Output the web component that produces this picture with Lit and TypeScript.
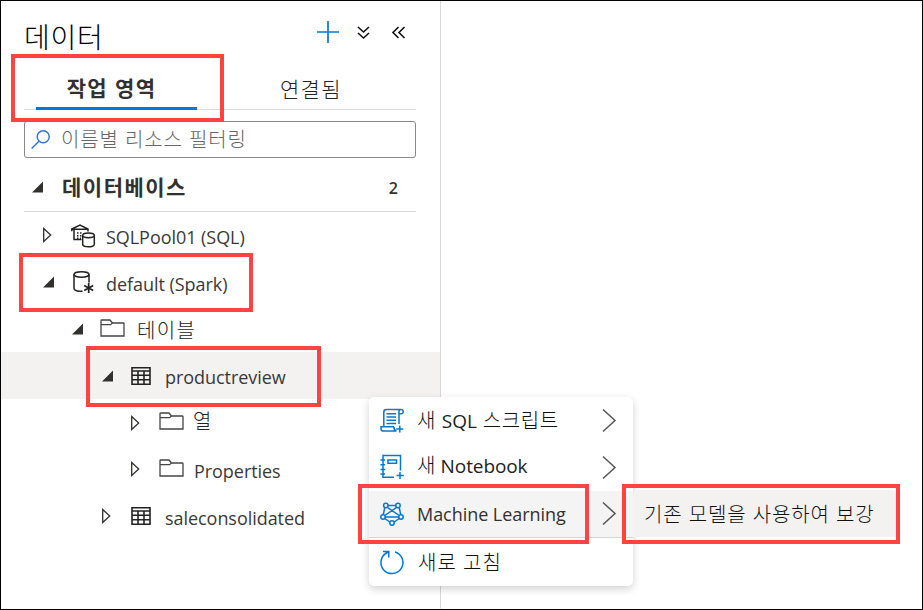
import { LitElement, html, css, svg, nothing } from "lit";
import { customElement, property } from "lit/decorators.js";

const icons: Record<string, unknown> = {
  open: svg`<path d="M12 2.500v11H1z" fill="#323130"/>`,
  closed: svg`<path d="M1.700 1.500v13l7-6.500z" fill="none" stroke="#323130" stroke-width="1.300"/>`,
  plus: svg`<path d="M11 0v22M0 11h22" stroke="#0078d4" stroke-width="1.700"/>`,
  down: svg`<path d="M1 1l5.500 5L12 1M1 7l5.500 5L12 7" fill="none" stroke="#111" stroke-width="1.600"/>`,
  left: svg`<path d="M6.500 1L1 6.500l5.500 5.500M12.500 1L7 6.500l5.500 5.500" fill="none" stroke="#111" stroke-width="1.600"/>`,
  search: svg`<g fill="none" stroke="#2b72d7" stroke-width="1.400"><circle cx="12.200" cy="6.800" r="6"/><path d="M8 11.200L.6 18.600"/></g>`,
  pool: svg`<g fill="none" stroke="#222" stroke-width="1.500"><path d="M.8 7.300V5L9 1l8 4v2.500M.8 5.300H17M3 6v9.500h7.500"/><path d="M6 9h6M6 11.700h5M6 14.300h4" stroke-dasharray="1.500 1.500"/><path fill="#fff" d="M11.700 11.300v9c0 3.400 11.600 3.400 11.600 0v-9"/><ellipse fill="#fff" cx="17.500" cy="11.300" rx="5.800" ry="2.400"/></g>`,
  spark: svg`<g fill="none" stroke="#222" stroke-width="1.500"><ellipse cx="8.500" cy="3.500" rx="7.500" ry="2.700"/><path d="M1 3.500v14c0 2 4 3 8.500 2.800M16 3.500v8"/><path d="M15.700 12v10M11.200 14.500l9 5M20.200 14.500l-9 5" stroke-width="1.700"/></g>`,
  folder: svg`<path d="M1 4.500V.7Q1 0 1.700 0H10l2.500 3h10.800q.7 0 .7.700V16H1zM1 4.700h9.500L12.500 3" fill="none" stroke="#444" stroke-width="1.300"/>`,
  table: svg`<path d="M1 .7h18v16.500H1zM1 4h18M1 8.300h18M1 12.700h18M7 4v13.200M13 4v13.200" fill="none" stroke="#222" stroke-width="1.600"/>`,
  chevron: svg`<path d="M1 .5l12 11L1 22.500" fill="none" stroke="#555" stroke-width="1.500"/>`,
  script: svg`<g fill="none" stroke="#0078d4" stroke-width="1.500"><path d="M3.800 17.500V3Q3.800 .5 6.500 .5H21q2.200 0 2.200 2.200T21 4.800h-2V2.500q0-2 2-2M19 4.500v10.500M6.500 4.800h9.500M6.500 8h9.500M6.500 11.200h9.500M6.500 14.500h9.500M14 17.800H1V19.500q0 2.600 2.500 2.600H16.500M14 18q-.3 3.500 2.500 4M19.800 16.500v7M16.300 20h7"/></g>`,
  notebook: svg`<g fill="none" stroke="#0078d4" stroke-width="1.500"><path d="M14 21.300H3V-.5h17.500v15M8 4h8.500v3.200H8zM.5 4h4.500M.5 8.800h4.500M.5 13.500h4.500M.5 18h4.500M20 16v7M16.500 19.500h7.300"/></g>`,
  ml: svg`<g fill="none" stroke="#0078d4" stroke-width="1.500"><path d="M6 3.500h12M5 4.500L3 14M19 4.500l2 9.500M6 4.500L20 14M18 4.500L4 14M5 15h14M4 16l6.500 4.500M20 16l-6.500 4.500"/><g fill="#f4f4f4"><circle cx="5.800" cy="3.500" r="2.200"/><circle cx="18" cy="3.500" r="2.200"/><circle cx="3" cy="15" r="2.200"/><circle cx="21" cy="15" r="2.200"/><circle cx="12" cy="21" r="2.200"/></g></g>`,
  refresh: svg`<path d="M15 2A11 11 0 1 1 8 2.300M3 1.500h5.800v6" fill="none" stroke="#0078d4" stroke-width="1.500"/>`,
};

@customElement("ui-icon")
class UiIcon extends LitElement {
  @property() name = "";
  @property({ type: Number }) w = 24;
  @property({ type: Number }) h = 24;
  static styles = css`
    :host { display: flex; flex: none; }
    svg { display: block; overflow: visible; }
  `;
  render() {
    return html`<svg width=${this.w} height=${this.h} viewBox="0 0 ${this.w} ${this.h}">${icons[this.name]}</svg>`;
  }
}

const tree = [
  { cls: "l1", open: false, icon: "pool", w: 24, h: 23, text: "SQLPool01 (SQL)", t: "latin" },
  { cls: "l1", open: true, icon: "spark", w: 21, h: 22, text: "default (Spark)", t: "latin" },
  { cls: "l2", open: true, icon: "folder", w: 25, h: 18, text: "테이블", t: "tables" },
  { cls: "l3 selected", open: true, icon: "table", w: 23, h: 18, text: "productreview", t: "latin" },
  { cls: "l4", open: false, icon: "folder", w: 25, h: 20, text: "열", t: "column" },
  { cls: "l4", open: false, icon: "folder", w: 25, h: 18, text: "Properties", t: "latin" },
  { cls: "l3", open: false, icon: "table", w: 23, h: 18, text: "saleconsolidated", t: "latin" },
];

const menu = [
  { cls: "", icon: "script", text: html`새 <i>SQL</i> 스크립트`, t: "m-sql", more: true },
  { cls: "", icon: "notebook", text: html`새 <i>Notebook</i>`, t: "m-note", more: true },
  { cls: "hover", icon: "ml", text: "Machine Learning", t: "m-ml", more: true },
  { cls: "", icon: "refresh", text: "새로 고침", t: "m-ref", more: false },
];

@customElement("app-root")
class AppRoot extends LitElement {
  static styles = css`
    :host { display: block; }
    * { box-sizing: border-box; }
    .page {
      position: relative; width: 923px; height: 610px; border: 1px solid #000;
      background: #fff; overflow: hidden; color: #3a3938;
      font: 300 20px/30px "Open Sans", "Noto Sans CJK KR", sans-serif; white-space: nowrap;
    }
    .panel { width: 440px; height: 608px; border-right: 1px solid #d8d8d8; }
    .header { display: flex; align-items: center; height: 62px; padding-left: 23px; }
    .title { width: 293px; font-size: 28px; line-height: 40px; letter-spacing: .7px; color: #000; padding-top: 10px; }
    .actions { display: flex; align-items: center; gap: 18px; }
    .actions ui-icon:last-child { margin-left: 4px; }
    .tabs { display: flex; height: 47px; width: 392px; margin-left: 23px; border-bottom: 1px solid #dcdcdc; }
    .tab { height: 47px; padding-top: 10px; letter-spacing: 1.300px; font-size: 21px; text-align: center; color: #222; }
    .tab.on { width: 161px; margin-left: 12px; padding-right: 10px; font-weight: 700; letter-spacing: 1.400px; border-bottom: 3px solid #0078d4; color: #323130; }
    .tab.off { margin-left: 83px; padding-top: 11px; }
    .search {
      display: flex; align-items: center; gap: 11px; width: 392px; height: 37px; margin: 11px 0 0 23px;
      padding-left: 6px; border: 1px solid #8a8886; border-radius: 3px; color: #666; letter-spacing: .9px;
    }
    .search span { padding-top: 1px; }
    .group {
      display: flex; align-items: center; width: 392px; height: 54px; margin-left: 23px; padding-top: 5px;
      padding-left: 7px; border-bottom: 1px solid #d6d6d6; color: #323130;
    }
    .group b { font-size: 21px; font-weight: 700; letter-spacing: 1.500px; margin-left: 17px; flex: 1; }
    .group .count { font-size: 16px; font-weight: 600; margin-right: 18px; padding-top: 2px; }
    .row { display: flex; align-items: center; height: 46.800px; }
    .l1 { padding-left: 41px; }
    .l2 { padding-left: 70px; }
    .l3 { padding-left: 100px; }
    .l4 { padding-left: 129px; }
    .selected { background: #f3f2f1; }
    .toggle { width: 14px; margin-right: 15px; }
    .kind { display: flex; justify-content: center; width: 24px; margin-right: 11px; }
    .latin { font-size: 18px; font-weight: 400; letter-spacing: -.05px; padding-top: 3px; }
    .tables { letter-spacing: 1.300px; margin-left: 2px; padding-top: 5px; color: #222; }
    .column { margin-left: -1px; padding-bottom: 1px; color: #222; }
    .menu {
      position: absolute; left: 368px; top: 396px; width: 264px; height: 189px; border-radius: 5px;
      background: #fff; box-shadow: 0 3px 9px rgba(0, 0, 0, .18); color: #111;
    }
    .item { display: flex; align-items: center; height: 47px; padding: 0 17px 0 11px; }
    .item .t { flex: 1; margin-left: 13px; }
    .item i { font-style: normal; font-weight: 400; font-size: 19px; letter-spacing: 0; color: #222; }
    .hover { background: #f4f4f4; border-bottom: 1px solid #d4d4d4; }
    .m-sql { letter-spacing: .6px; }
    .item .m-note { padding-bottom: 3px; }
    .m-note i { letter-spacing: -.1px; }
    .m-ml { font-size: 18px; font-weight: 400; letter-spacing: -.05px; color: #323130; }
    .item .m-ref { letter-spacing: 1px; margin-left: 14px; padding-top: 3px; }
    .submenu {
      position: absolute; left: 632px; top: 489px; width: 263px; height: 47px; padding: 10px 0 0 11px;
      border-radius: 5px 5px 0 0; background: #f3f2f1; color: #111; letter-spacing: .9px;
    }
    .mark { position: absolute; border: 4px solid #ff4343; }
    .mark-tab { left: 10px; top: 53px; width: 213px; height: 68px; }
    .mark-spark { left: 18px; top: 252px; width: 234px; height: 59px; }
    .mark-table { left: 85px; top: 345px; width: 235px; height: 61px; }
    .mark-ml { left: 357px; top: 483px; width: 231px; height: 60px; }
    .mark-sub { left: 621px; top: 483px; width: 278px; height: 60px; }
  `;
  render() {
    return html`<div class="page">
      <div class="panel">
        <div class="header"><div class="title">데이터</div><div class="actions"
          ><ui-icon name="plus" w="22" h="22"></ui-icon
          ><ui-icon name="down" w="13" h="13"></ui-icon
          ><ui-icon name="left" w="13" h="13"></ui-icon></div></div>
        <div class="tabs"><div class="tab on">작업 영역</div><div class="tab off">연결됨</div></div>
        <div class="search"><ui-icon name="search" w="19" h="19"></ui-icon><span>이름별 리소스 필터링</span></div>
        <div class="group"><ui-icon name="open" w="14" h="16"></ui-icon><b>데이터베이스</b><span class="count">2</span></div>
        ${tree.map((n) => html`<div class="row ${n.cls}"
          ><ui-icon class="toggle" name=${n.open ? "open" : "closed"} w="14" h="16"></ui-icon
          ><span class="kind"><ui-icon name=${n.icon} w=${n.w} h=${n.h}></ui-icon></span
          ><span class=${n.t}>${n.text}</span></div>`)}
      </div>
      <div class="menu">${menu.map((m) => html`<div class="item ${m.cls}"
        ><ui-icon name=${m.icon}></ui-icon><span class="t ${m.t}">${m.text}</span
        >${m.more ? html`<ui-icon name="chevron" w="14" h="24"></ui-icon>` : nothing}</div>`)}</div>
      <div class="submenu">기존 모델을 사용하여 보강</div>
      ${["tab", "spark", "table", "ml", "sub"].map((m) => html`<div class="mark mark-${m}"></div>`)}
    </div>`;
  }
}
